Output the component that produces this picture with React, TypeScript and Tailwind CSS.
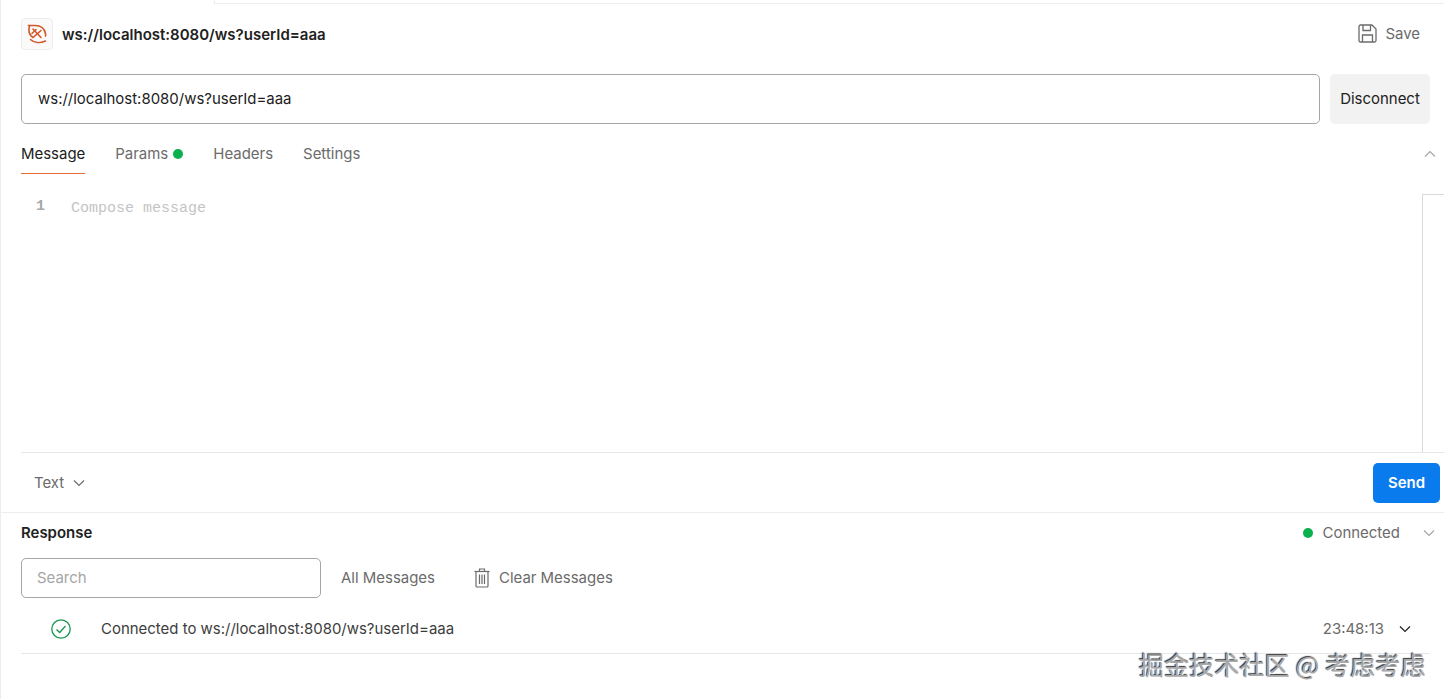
import React from "react";

function Chevron({ up = false, className = "" }: { up?: boolean; className?: string }) {
  return (
    <svg width="14" height="8" viewBox="0 0 14 8" fill="none" className={className}>
      <path d={up ? "M2 6.5 L7 1.5 L12 6.5" : "M2 1.5 L7 6.5 L12 1.5"} stroke="currentColor" strokeWidth="1.2" />
    </svg>
  );
}

function WsIcon() {
  return (
    <svg width="22" height="22" viewBox="0 0 22 22" fill="none" stroke="#d4572a" strokeWidth="1.6" strokeLinecap="round">
      <path d="M2.5 2.5 H9 C14.5 2.5 18.5 5.5 19.5 10.5 C19.7 11.5 19.7 12.5 19.5 13" />
      <path d="M3.5 3 C2 7.5 3.5 12 7 14.5 L15 7.5" />
      <path d="M7 6 L15 14.5" />
      <path d="M6 10.5 L10 6.5" />
      <path d="M4.5 16.5 C8 20 14 20.5 19.5 18" />
    </svg>
  );
}

function SaveIcon() {
  return (
    <svg width="19" height="19" viewBox="0 0 19 19" fill="none" stroke="#6b6b6b" strokeWidth="1.3">
      <path d="M2.5 1 H14 L18 5 V16.5 A1.5 1.5 0 0 1 16.5 18 H2.5 A1.5 1.5 0 0 1 1 16.5 V2.5 A1.5 1.5 0 0 1 2.5 1 Z" />
      <path d="M5 1 V6.5 H12.5 V1" />
      <path d="M4.5 18 V11 H14.5 V18" />
    </svg>
  );
}

function TrashIcon() {
  return (
    <svg width="16" height="20" viewBox="0 0 16 20" fill="none" stroke="#6b6b6b" strokeWidth="1.2">
      <path d="M0.5 3.5 H15.5" />
      <path d="M5.5 3 V1 H10.5 V3" />
      <path d="M2 3.5 V18 A1 1 0 0 0 3 19 H13 A1 1 0 0 0 14 18 V3.5" />
      <path d="M5.5 6.5 V16 M8 6.5 V16 M10.5 6.5 V16" />
    </svg>
  );
}

function CheckCircle() {
  return (
    <svg width="20" height="20" viewBox="0 0 20 20" fill="none" stroke="#16964f" strokeWidth="1.3">
      <circle cx="10" cy="10" r="9.2" />
      <path d="M5.5 10.5 L8.7 13.5 L14.5 7" />
    </svg>
  );
}

export default function App() {
  return (
    <div
      className="relative flex h-[699px] w-[1444px] flex-col overflow-hidden border-l border-[#ededed] bg-white text-[14.96px] text-[#6b6b6b]"
      style={{ fontFamily: "Inter, 'Noto Sans CJK SC', sans-serif" }}
    >
      <div className="ml-[213px] h-[4px] border-b border-l border-[#ededed]" />

      <div className="flex h-[60px] items-center justify-between pl-[20px] pr-[24px]">
        <div className="flex items-center gap-[9px]">
          <div className="flex h-[32px] w-[32px] items-center justify-center rounded-[4px] border border-[#eeeeee] bg-[#fafafa]">
            <WsIcon />
          </div>
          <span className="pt-[2px] text-[15px] font-semibold text-[#212121]">ws://localhost:8080/ws?userId=aaa</span>
        </div>
        <div className="flex items-center gap-[8px]">
          <SaveIcon />
          <span>Save</span>
        </div>
      </div>

      <div className="mt-[10px] flex h-[50px] gap-[10px] pl-[20px] pr-[14px]">
        <div className="flex flex-1 items-center rounded-[5px] border border-[#a6a6a6] pl-[16px] text-[#212121]">
          ws://localhost:8080/ws?userId=aaa
        </div>
        <div className="flex w-[100px] items-center justify-center rounded-[5px] bg-[#f2f2f2] text-[#212121]">
          Disconnect
        </div>
      </div>

      <div className="flex h-[50px] items-start justify-between pl-[20px] pr-[7px]">
        <div className="flex gap-[30px]">
          <div className="flex h-[50px] items-center border-b border-[#ea6c2f] pt-[11px] text-[#212121]">Message</div>
          <div className="flex h-[50px] items-center gap-[5px] pt-[11px]">
            Params
            <span className="mt-[-1px] h-[10px] w-[10px] rounded-full bg-[#0cb14d]" />
          </div>
          <div className="flex h-[50px] items-center pt-[11px]">Headers</div>
          <div className="flex h-[50px] items-center pt-[11px]">Settings</div>
        </div>
        <Chevron up className="mt-[26px] text-[#a6a6a6]" />
      </div>

      <div className="flex h-[278px] pl-[20px]">
        <div className="flex flex-1 items-start pt-[24px]">
          <span className="mt-[-2px] w-[50px] pl-[15px] text-[15px] font-bold text-[#a8a8a8]" style={{ fontFamily: "'Liberation Mono', monospace" }}>
            1
          </span>
          <span className="text-[15px] text-[#c4c4c4]" style={{ fontFamily: "'Liberation Mono', monospace" }}>
            Compose message
          </span>
        </div>
        <div className="mt-[20px] w-[22px] border-l border-t border-[#d9d9d9]" />
      </div>

      <div className="ml-[20px] flex h-[60px] items-center justify-between border-t border-[#e6e6e6] pl-[13px] pr-[4px]">
        <div className="flex items-center gap-[8px] pt-[1px]">
          <span>Text</span>
          <Chevron className="text-[#6b6b6b]" />
        </div>
        <div className="flex h-[40px] w-[67px] items-center justify-center rounded-[5px] bg-[#097bed] pt-[1px] font-semibold text-white">
          Send
        </div>
      </div>

      <div className="border-t border-[#ededed] pl-[20px] pr-[8px]">
        <div className="flex h-[40px] items-center justify-between">
          <span className="font-semibold text-[#212121]">Response</span>
          <div className="flex items-center">
            <span className="h-[10px] w-[10px] rounded-full bg-[#0cb14d]" />
            <span className="ml-[10px]">Connected</span>
            <Chevron className="ml-[22px] text-[#a6a6a6]" />
          </div>
        </div>

        <div className="mt-[5px] flex items-center">
          <div className="flex h-[40px] w-[300px] items-center rounded-[5px] border border-[#a6a6a6] pl-[15px] text-[#a6a6a6]">
            Search
          </div>
          <span className="ml-[20px]">All Messages</span>
          <span className="ml-[39px] mr-[9px] flex">
            <TrashIcon />
          </span>
          <span>Clear Messages</span>
        </div>

        <div className="mr-[6px] mt-[10px] flex h-[46px] items-center justify-between border-b border-[#e6e6e6] pb-[2px]">
          <div className="flex items-center">
            <span className="ml-[30px] flex">
              <CheckCircle />
            </span>
            <span className="ml-[30px] text-[#3d3d3d]">Connected to ws://localhost:8080/ws?userId=aaa</span>
          </div>
          <div className="flex items-center gap-[14px] pr-[18px]">
            <span className="text-[#6b6b6b]">23:48:13</span>
            <Chevron className="text-[#212121]" />
          </div>
        </div>
      </div>

      <div
        className="absolute left-[1138px] top-[648px] whitespace-nowrap text-[25px] leading-[32px] tracking-[0.15px] text-[#a8a8a8]"
        style={{ fontFamily: "'Noto Sans CJK SC', sans-serif", textShadow: "1px 1px 1px #ffffff, -1px -1px 1px #333333" }}
      >
        掘金技术社区 @ 考虑考虑
      </div>
    </div>
  );
}
